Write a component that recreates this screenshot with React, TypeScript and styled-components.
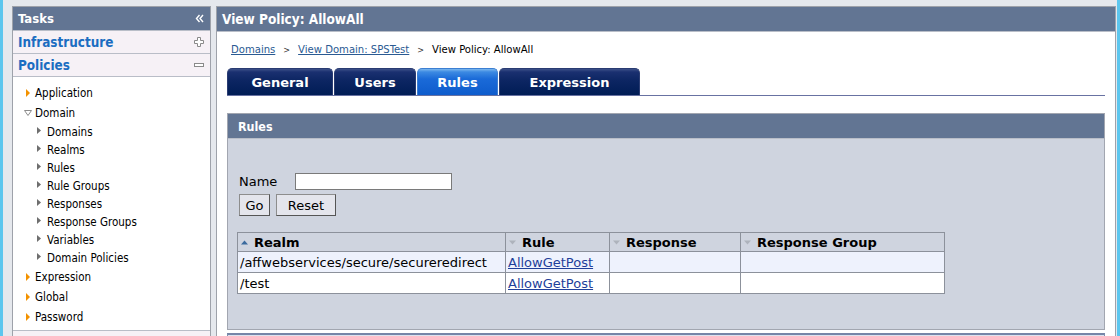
import styled, { createGlobalStyle } from "styled-components";

const GlobalStyle = createGlobalStyle`
  html, body {
    margin: 0;
    padding: 0;
    background: #e5e8ed;
    font-family: "DejaVu Sans Condensed", "DejaVu Sans", sans-serif;
    font-size: 12px;
    color: #000;
  }
`;

const tree = [
  { label: "Application", open: false },
  {
    label: "Domain",
    open: true,
    children: ["Domains", "Realms", "Rules", "Rule Groups", "Responses", "Response Groups", "Variables", "Domain Policies"],
  },
  { label: "Expression", open: false },
  { label: "Global", open: false },
  { label: "Password", open: false },
];

const tabs = ["General", "Users", "Rules", "Expression"];
const tabWidths = [106, 82, 81, 141];

const rows = [
  { realm: "/affwebservices/secure/secureredirect", rule: "AllowGetPost", odd: true },
  { realm: "/test", rule: "AllowGetPost", odd: false },
];

export default function App() {
  return (
    <Page>
      <GlobalStyle />
      <Sidebar>
        <PanelHeader>
          Tasks
          <svg width="9" height="9" viewBox="0 0 9 9">
            <path d="M4.5 1 L1.5 4.5 L4.5 8 M8 1 L5 4.5 L8 8" stroke="#fff" strokeWidth="1.4" fill="none" />
          </svg>
        </PanelHeader>
        <Section>
          Infrastructure
          <svg width="10" height="10" viewBox="0 0 10 10">
            <path d="M3.5 0.5 H6.5 V3.5 H9.5 V6.5 H6.5 V9.5 H3.5 V6.5 H0.5 V3.5 H3.5 Z" stroke="#8a8a8a" fill="#fff" />
          </svg>
        </Section>
        <Section>
          Policies
          <svg width="10" height="4" viewBox="0 0 10 4">
            <rect x="0.5" y="0.5" width="9" height="3" stroke="#8a8a8a" fill="#fff" />
          </svg>
        </Section>
        <Tree>
          {tree.map((item) => (
            <li key={item.label}>
              <TopItem>
                <Marker $open={item.open}>
                  {item.open ? (
                    <svg width="8" height="6" viewBox="0 0 8 6">
                      <path d="M0.5 0.5 H7.5 L4 5.5 Z" stroke="#8c8c8c" fill="#fff" />
                    </svg>
                  ) : (
                    <svg width="4" height="8" viewBox="0 0 4 8">
                      <path d="M0 0 L4 4 L0 8 Z" fill="#f39200" />
                    </svg>
                  )}
                </Marker>
                {item.label}
              </TopItem>
              {item.children && (
                <SubList>
                  {item.children.map((c) => (
                    <SubItem key={c}>
                      <svg width="4" height="7" viewBox="0 0 4 7">
                        <path d="M0 0 L4 3.5 L0 7 Z" fill="#6e6e6e" />
                      </svg>
                      {c}
                    </SubItem>
                  ))}
                </SubList>
              )}
            </li>
          ))}
        </Tree>
        <Section />
      </Sidebar>

      <Main>
        <MainHeader>View Policy: AllowAll</MainHeader>
        <MainBody>
          <Crumbs>
            <CrumbLink>Domains</CrumbLink>
            <Sep>&gt;</Sep>
            <CrumbLink>View Domain: SPSTest</CrumbLink>
            <Sep>&gt;</Sep>
            <span>View Policy: AllowAll</span>
          </Crumbs>
          <TabBar>
            {tabs.map((t, i) => (
              <Tab key={t} $active={t === "Rules"} style={{ width: tabWidths[i] }}>
                {t}
              </Tab>
            ))}
          </TabBar>

          <Box>
            <BoxHeader>Rules</BoxHeader>
            <BoxBody>
              <FieldRow>
                <label>Name</label>
                <TextInput />
              </FieldRow>
              <Buttons>
                <Button $w={31}>Go</Button>
                <Button $w={60}>Reset</Button>
              </Buttons>
              <Table>
                <colgroup>
                  <col style={{ width: 268 }} />
                  <col style={{ width: 104 }} />
                  <col style={{ width: 131 }} />
                  <col style={{ width: 204 }} />
                </colgroup>
                <thead>
                  <tr>
                    <Th>
                      <SortUp />
                      Realm
                    </Th>
                    <Th>
                      <SortDown />
                      Rule
                    </Th>
                    <Th>
                      <SortDown />
                      Response
                    </Th>
                    <Th>
                      <SortDown />
                      Response Group
                    </Th>
                  </tr>
                </thead>
                <tbody>
                  {rows.map((r) => (
                    <Tr key={r.realm} $odd={r.odd}>
                      <Td>{r.realm}</Td>
                      <Td>
                        <RuleLink>{r.rule}</RuleLink>
                      </Td>
                      <Td />
                      <Td />
                    </Tr>
                  ))}
                </tbody>
              </Table>
            </BoxBody>
          </Box>
          <NextBox />
        </MainBody>
      </Main>
    </Page>
  );
}

function SortUp() {
  return (
    <svg width="7" height="5" viewBox="0 0 7 5">
      <path d="M0 4.5 L3.5 0.5 L7 4.5 Z" fill="#3a6a9e" />
    </svg>
  );
}

function SortDown() {
  return (
    <svg width="7" height="5" viewBox="0 0 7 5">
      <path d="M0 0.5 L3.5 4.5 L7 0.5 Z" fill="#aeb3bc" />
    </svg>
  );
}

const Page = styled.div`
  display: flex;
  gap: 5px;
  height: 336px;
  overflow: hidden;
  box-sizing: border-box;
  padding: 6px 1px 0 9px;
  border-left: 3px solid #5cc6ee;
  border-right: 3px solid #5cc6ee;
`;

const Sidebar = styled.div`
  width: 199px;
  flex: none;
  box-sizing: border-box;
  border: 1px solid #9ea2aa;
  border-bottom: none;
  background: #fff;
  display: flex;
  flex-direction: column;
  overflow: hidden;
`;

const PanelHeader = styled.div`
  height: 24px;
  flex: none;
  background: #627593;
  color: #fff;
  font-weight: bold;
  font-size: 13px;
  display: flex;
  align-items: center;
  justify-content: space-between;
  padding: 0 6px 0 5px;
  border-bottom: 1px solid #b9bec8;
  box-sizing: border-box;
`;

const Section = styled.div`
  height: 23px;
  flex: none;
  box-sizing: border-box;
  background: #f6f1f6;
  border-bottom: 1px solid #b9bdc7;
  color: #1b6dc1;
  font-weight: bold;
  font-size: 13.4px;
  display: flex;
  align-items: center;
  justify-content: space-between;
  padding: 0 6px 0 5px;

  &:last-child {
    border-top: 1px solid #b9bdc7;
  }
`;

const Tree = styled.ul`
  list-style: none;
  margin: 0;
  padding: 6px 0 4px 13px;
  height: 253px;
  box-sizing: border-box;
  flex: none;
  font-size: 11.5px;
`;

const TopItem = styled.div`
  height: 20px;
  display: flex;
  align-items: center;
`;

const Marker = styled.span<{ $open?: boolean }>`
  width: 9px;
  flex: none;
  display: flex;
  align-items: center;
  margin-left: ${(p) => (p.$open ? "-2px" : "0")};
  padding-right: ${(p) => (p.$open ? "2px" : "0")};
`;

const SubList = styled.ul`
  list-style: none;
  margin: 0;
  padding: 0 0 0 11px;
`;

const SubItem = styled.li`
  height: 18px;
  display: flex;
  align-items: center;
  gap: 6px;

  svg {
    align-self: flex-start;
    margin-top: 4px;
  }
`;

const Main = styled.div`
  flex: 1;
  box-sizing: border-box;
  border: 1px solid #9ea2aa;
  border-bottom: none;
  background: #fff;
  display: flex;
  flex-direction: column;
`;

const MainHeader = styled.div`
  height: 24px;
  flex: none;
  background: #627593;
  color: #fff;
  font-weight: bold;
  font-size: 13.5px;
  display: flex;
  align-items: center;
  padding-left: 5px;
  border-bottom: 1px solid #b9bec8;
`;

const MainBody = styled.div`
  padding: 0 10px;
`;

const Crumbs = styled.div`
  height: 34px;
  display: flex;
  align-items: center;
  gap: 8px;
  padding: 1px 0 0 4px;
  font-size: 11.2px;
  box-sizing: border-box;
`;

const CrumbLink = styled.a`
  color: #2a5a92;
  text-decoration: underline;
`;

const Sep = styled.span`
  font-size: 9px;
  color: #333;
`;

const TabBar = styled.div`
  display: flex;
  gap: 1px;
  margin-top: 2px;
  border-bottom: 1px solid #6872a2;
  height: 27px;
`;

const Tab = styled.div<{ $active?: boolean }>`
  box-sizing: border-box;
  height: 27px;
  border-radius: 5px 5px 0 0;
  border: 1px solid ${(p) => (p.$active ? "#3c7fd2" : "#2a3c72")};
  border-bottom: none;
  background: ${(p) =>
    p.$active
      ? "linear-gradient(#7ab6ee 0px, #3c8ae2 3px, #1a6ad8 10px, #0e5ccc 100%)"
      : "linear-gradient(#3c5088 0px, #1a3070 3px, #0c2562 12px, #001d55 100%)"};
  color: #fff;
  font-family: "DejaVu Sans", sans-serif;
  font-weight: bold;
  font-size: 13px;
  display: flex;
  align-items: center;
  justify-content: center;
  padding-top: 1px;
`;

const Box = styled.div`
  margin-top: 17px;
  border: 1px solid #a2a6b0;
  background: #cfd4df;
  height: 217px;
  box-sizing: border-box;
`;

const BoxHeader = styled.div`
  height: 24px;
  background: #627593;
  color: #fff;
  font-weight: bold;
  font-size: 12.4px;
  display: flex;
  align-items: center;
  padding-left: 10px;
  border-bottom: 1px solid #b9bec8;
`;

const BoxBody = styled.div`
  padding: 34px 10px 0 9px;
  font-family: "DejaVu Sans", sans-serif;
  font-size: 13px;
`;

const FieldRow = styled.div`
  display: flex;
  align-items: center;
  gap: 18px;
  padding-left: 2px;
  height: 17px;
`;

const TextInput = styled.input`
  width: 157px;
  height: 17px;
  box-sizing: border-box;
  border: 1px solid #7a7a7a;
  background: #fff;
`;

const Buttons = styled.div`
  display: flex;
  gap: 6px;
  margin-top: 4px;
  padding-left: 2px;
`;

const Button = styled.button<{ $w: number }>`
  width: ${(p) => p.$w}px;
  height: 22px;
  box-sizing: border-box;
  background: #e4e5ec;
  border: 1px solid #8d8d8d;
  border-right-color: #555;
  border-bottom-color: #555;
  font-family: inherit;
  font-size: 13px;
  padding: 0;
  color: #000;
`;

const Table = styled.table`
  margin-top: 16px;
  border-collapse: collapse;
  table-layout: fixed;
  width: 707px;
  font-size: 13px;
`;

const Th = styled.th`
  height: 18px;
  border: 1px solid #8c919b;
  text-align: left;
  padding: 0 3px;
  font-weight: bold;
  font-size: 13px;
  background: #cfd4df;
  white-space: nowrap;

  svg {
    margin-right: 6px;
    vertical-align: 2px;
  }
`;

const Tr = styled.tr<{ $odd?: boolean }>`
  background: ${(p) => (p.$odd ? "#eef2fd" : "#fff")};
`;

const Td = styled.td`
  height: 20px;
  border: 1px solid #8c919b;
  padding: 0 2px;
  white-space: nowrap;
`;

const RuleLink = styled.a`
  color: #1f3f9a;
  text-decoration: underline;
`;

const NextBox = styled.div`
  margin-top: 3px;
  height: 20px;
  border: 1px solid #8090b0;
  border-top: 2px solid #7686a8;
  background: #dde3ef;
`;
